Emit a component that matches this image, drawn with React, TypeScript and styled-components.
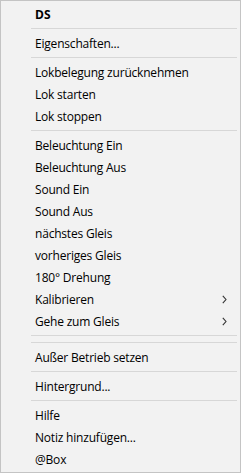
import React from "react";
import styled, { createGlobalStyle } from "styled-components";

const GlobalStyle = createGlobalStyle`
  html, body {
    margin: 0;
    padding: 0;
    background: #ffffff;
  }
`;

const Menu = styled.div`
  box-sizing: border-box;
  width: 241px;
  height: 473px;
  padding: 2px 2px;
  border: 1px solid #c4c4c4;
  background: #f2f2f2;
  font-family: "Open Sans", "Noto Sans", sans-serif;
  font-size: 12px;
  color: #000000;
  display: flex;
  flex-direction: column;
`;

const Item = styled.div<{ $bold?: boolean }>`
  height: 22px;
  display: flex;
  align-items: center;
  justify-content: space-between;
  padding: 0 11px 0 32px;
  font-weight: ${(p) => (p.$bold ? 700 : 400)};
  letter-spacing: ${(p) => (p.$bold ? "0" : "-0.2px")};
  white-space: nowrap;
`;

const Separator = styled.div`
  height: 7px;
  display: flex;
  align-items: center;
  padding: 0 1px 0 28px;

  &::after {
    content: "";
    flex: 1;
    height: 1px;
    background: #d7d7d7;
  }
`;

const Chevron = () => (
  <svg width="5" height="9" viewBox="0 0 5 9">
    <path d="M0.8 0.8 L4 4.5 L0.8 8.2" fill="none" stroke="#333" strokeWidth="1.1" />
  </svg>
);

type Entry = { label?: string; bold?: boolean; sub?: boolean; sep?: boolean };

const entries: Entry[] = [
  { label: "DS", bold: true },
  { sep: true },
  { label: "Eigenschaften..." },
  { sep: true },
  { label: "Lokbelegung zurücknehmen" },
  { label: "Lok starten" },
  { label: "Lok stoppen" },
  { sep: true },
  { label: "Beleuchtung Ein" },
  { label: "Beleuchtung Aus" },
  { label: "Sound Ein" },
  { label: "Sound Aus" },
  { label: "nächstes Gleis" },
  { label: "vorheriges Gleis" },
  { label: "180° Drehung" },
  { label: "Kalibrieren", sub: true },
  { label: "Gehe zum Gleis", sub: true },
  { sep: true },
  { sep: true },
  { label: "Außer Betrieb setzen" },
  { sep: true },
  { label: "Hintergrund..." },
  { sep: true },
  { label: "Hilfe" },
  { label: "Notiz hinzufügen..." },
  { label: "@Box" },
];

export default function App() {
  return (
    <>
      <GlobalStyle />
      <Menu>
        {entries.map((e, i) =>
          e.sep ? (
            <Separator key={i} />
          ) : (
            <Item key={i} $bold={e.bold}>
              <span>{e.label}</span>
              {e.sub && <Chevron />}
            </Item>
          )
        )}
      </Menu>
    </>
  );
}
